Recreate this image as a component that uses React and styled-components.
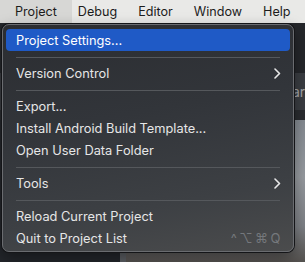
import styled, { createGlobalStyle } from "styled-components";

const GlobalStyle = createGlobalStyle`
    * {
        box-sizing: border-box;
    }
    body {
        margin: 0;
        background-color: #25272b;
        font-family: "Inter", "Noto Sans", sans-serif;
        -webkit-font-smoothing: antialiased;
    }
`;

const Screen = styled.div`
    width: 305px;
    height: 262px;
    position: relative;
    overflow: hidden;
    display: flex;
    flex-direction: column;
`;

const MenuBar = styled.div`
    height: 23px;
    display: flex;
    align-items: stretch;
    gap: 21px;
    background-color: #e9e9e7;
    color: #1c1c1c;
    font-size: 12.6px;
`;

const MenuBarItem = styled.div`
    display: flex;
    align-items: center;
    padding: ${({ $active }) => ($active ? "0 15px" : "0")};
    margin-right: ${({ $active }) => ($active ? "-15px" : "0")};
    background-color: ${({ $active }) => ($active ? "#d7d7d5" : "transparent")};
`;

const Workspace = styled.div`
    flex: 1;
    display: flex;
    flex-direction: column;
`;

const Band = styled.div`
    height: ${({ $h }) => $h}px;
    background: ${({ $bg }) => $bg};
    display: flex;
    align-items: center;
`;

const BandLabel = styled.span`
    padding-left: 283px;
    color: #a3a5a8;
    font-size: 14px;
    white-space: nowrap;
`;

const LowerBand = styled.div`
    flex: 1;
    display: flex;
`;

const SidePanel = styled.div`
    width: 126px;
    background-color: #23262b;
    border-right: 6px solid #5b5e63;
`;

const Viewport = styled.div`
    flex: 1;
    background: linear-gradient(180deg, #858b92 0%, #979ba0 40%, #7d8085 75%, #55524f 100%);
`;

const Dropdown = styled.div`
    position: absolute;
    top: 24px;
    left: 2px;
    width: 292px;
    height: 228px;
    padding: 4px 3px;
    border-radius: 7px;
    border: 1px solid #6a6c70;
    box-shadow: 0 0 0 1px #141518, 0 6px 16px rgba(0, 0, 0, 0.4);
    background: linear-gradient(170deg, #2b2d31 0%, #32353a 40%, #3d4044 75%, #4b4c4d 100%);
    color: #e8e8e8;
    font-size: 12.8px;
`;

const Item = styled.div`
    height: 22px;
    display: flex;
    align-items: center;
    justify-content: space-between;
    padding: 0 9px 0 10px;
    border-radius: 4px;
    background-color: ${({ $selected }) => ($selected ? "#1f5ac6" : "transparent")};
    color: ${({ $selected }) => ($selected ? "#ffffff" : "#e6e6e6")};
`;

const Separator = styled.div`
    height: 1px;
    margin: 6px 10px 4px;
    background-color: #55585c;
`;

const Shortcut = styled.span`
    color: #75787c;
    font-size: 13px;
    letter-spacing: 2.5px;
    margin-right: -2px;
`;

const Chevron = () => (
    <svg width="7" height="11" viewBox="0 0 7 11" fill="none">
        <path d="M1 1l4.5 4.5L1 10" stroke="#e8e8e8" strokeWidth="1.6" strokeLinecap="round" strokeLinejoin="round" />
    </svg>
);

const barItems = ["Project", "Debug", "Editor", "Window", "Help"];

const menu = [
    { label: "Project Settings...", selected: true },
    "sep",
    { label: "Version Control", sub: true },
    "sep",
    { label: "Export..." },
    { label: "Install Android Build Template..." },
    { label: "Open User Data Folder" },
    "sep",
    { label: "Tools", sub: true },
    "sep",
    { label: "Reload Current Project" },
    { label: "Quit to Project List", shortcut: "^⌥⌘Q" },
];

function App() {
    return (
        <>
            <GlobalStyle />
            <Screen>
                <MenuBar>
                    {barItems.map((name, i) => (
                        <MenuBarItem key={name} $active={i === 0}>
                            {name}
                        </MenuBarItem>
                    ))}
                </MenuBar>
                <Workspace>
                    <Band $h={50} $bg="#25272b" />
                    <Band $h={37} $bg="#3a3d42">
                        <BandLabel>Par</BandLabel>
                    </Band>
                    <Band $h={10} $bg="#2a2c30" />
                    <LowerBand>
                        <SidePanel />
                        <Viewport />
                    </LowerBand>
                </Workspace>
                <Dropdown>
                    {menu.map((entry, i) =>
                        entry === "sep" ? (
                            <Separator key={i} />
                        ) : (
                            <Item key={i} $selected={entry.selected}>
                                <span>{entry.label}</span>
                                {entry.sub && <Chevron />}
                                {entry.shortcut && <Shortcut>{entry.shortcut}</Shortcut>}
                            </Item>
                        )
                    )}
                </Dropdown>
            </Screen>
        </>
    );
}

export default App;
